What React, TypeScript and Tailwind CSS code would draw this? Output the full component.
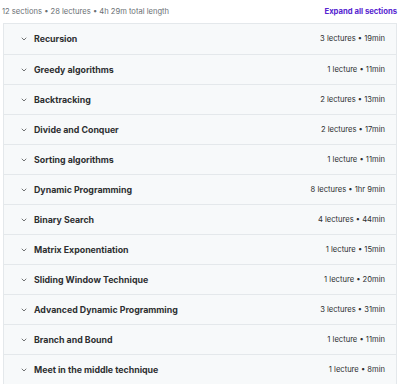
import { ChevronDown } from "lucide-react";

const sections = [
  { title: "Recursion", meta: "3 lectures • 19min" },
  { title: "Greedy algorithms", meta: "1 lecture • 11min" },
  { title: "Backtracking", meta: "2 lectures • 13min" },
  { title: "Divide and Conquer", meta: "2 lectures • 17min" },
  { title: "Sorting algorithms", meta: "1 lecture • 11min" },
  { title: "Dynamic Programming", meta: "8 lectures • 1hr 9min" },
  { title: "Binary Search", meta: "4 lectures • 44min" },
  { title: "Matrix Exponentiation", meta: "1 lecture • 15min" },
  { title: "Sliding Window Technique", meta: "1 lecture • 20min" },
  { title: "Advanced Dynamic Programming", meta: "3 lectures • 31min" },
  { title: "Branch and Bound", meta: "1 lecture • 11min" },
  { title: "Meet in the middle technique", meta: "1 lecture • 8min" },
];

export default function App() {
  return (
    <div className="h-[384px] w-[400px] overflow-hidden bg-white font-['Inter',sans-serif]">
      <div className="flex h-[23px] items-center justify-between pl-[2px] pr-[3px]">
        <span className="text-[7.6px] text-[#6a6f73]">
          12 sections • 28 lectures • 4h 29m total length
        </span>
        <button className="text-[7.7px] font-bold text-[#5624d0]">Expand all sections</button>
      </div>
      <div className="mx-[3px] border border-[#e4e8eb]">
        {sections.map((s, i) => (
          <div
            key={s.title}
            className={
              "flex h-[30px] items-center bg-[#f7f9fa] pl-[16px] pr-[11px] " +
              (i > 0 ? "border-t border-[#e4e8eb]" : "")
            }
          >
            <ChevronDown size={8} strokeWidth={2} className="text-[#2d2f31]" />
            <span className="ml-[6px] flex-1 text-[8.8px] font-bold text-[#2d2f31]">{s.title}</span>
            <span className="text-[7.6px] text-[#2d2f31]">{s.meta}</span>
          </div>
        ))}
      </div>
    </div>
  );
}
